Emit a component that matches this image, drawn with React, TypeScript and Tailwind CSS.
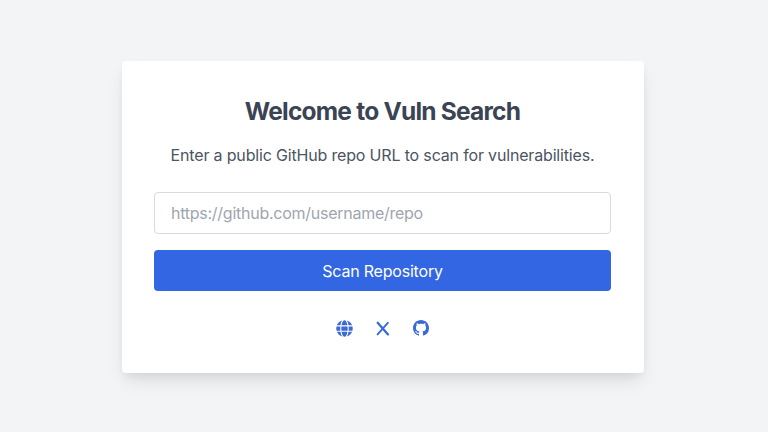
import { FaGlobe } from "react-icons/fa";

function XIcon() {
  return (
    <svg width="14" height="15" viewBox="0 0 14 15" fill="none" stroke="currentColor" strokeLinecap="round">
      <path d="M1.7 1.8 L12 13.4" strokeWidth="2.3" />
      <path d="M11.8 1.8 L1.6 13.4" strokeWidth="1.9" />
    </svg>
  );
}

function GithubIcon() {
  return (
    <svg width="16" height="16" viewBox="0 0 16 16" fill="currentColor">
      <path d="M8 0C3.58 0 0 3.58 0 8c0 3.54 2.29 6.53 5.47 7.59.4.07.55-.17.55-.38 0-.19-.01-.82-.01-1.49-2.01.37-2.53-.49-2.69-.94-.09-.23-.48-.94-.82-1.13-.28-.15-.68-.52-.01-.53.63-.01 1.08.58 1.23.82.72 1.21 1.87.87 2.33.66.07-.52.28-.87.51-1.07-1.78-.2-3.64-.89-3.64-3.95 0-.87.31-1.59.82-2.15-.08-.2-.36-1.02.08-2.12 0 0 .67-.21 2.2.82.64-.18 1.32-.27 2-.27s1.36.09 2 .27c1.53-1.04 2.2-.82 2.2-.82.44 1.1.16 1.92.08 2.12.51.56.82 1.27.82 2.15 0 3.07-1.87 3.75-3.65 3.95.29.25.54.73.54 1.48 0 1.07-.01 1.93-.01 2.2 0 .21.15.46.55.38A8.01 8.01 0 0 0 16 8c0-4.42-3.58-8-8-8z" />
    </svg>
  );
}

export default function App() {
  return (
    <div className="flex h-[432px] w-full justify-center bg-[#f2f4f6] pt-[61px] pr-[3px] font-['Inter','Liberation_Sans',sans-serif]">
      <div className="flex h-[312px] w-[522px] flex-col items-center rounded bg-white px-8 pt-8 shadow-[0_10px_18px_-3px_rgba(0,0,0,0.1),0_4px_8px_-2px_rgba(0,0,0,0.06)]">
        <h1 className="text-[24.5px] leading-9 font-bold tracking-[-0.78px] whitespace-nowrap text-[#3a4454]">Welcome to Vuln Search</h1>
        <p className="mt-[14px] text-base leading-6 tracking-[-0.17px] whitespace-nowrap text-[#4b5563]">
          Enter a public GitHub repo URL to scan for vulnerabilities.
        </p>
        <input
          type="text"
          placeholder="https://github.com/username/repo"
          className="mt-[24.5px] h-[42.5px] w-[457px] rounded border border-[#d8dadf] bg-white px-4 text-base tracking-[-0.26px] text-gray-700 placeholder:text-[#a0a5af]"
        />
        <button className="mt-4 h-[41px] w-[457px] rounded bg-[#3366e2] text-base tracking-[-0.2px] text-white">Scan Repository</button>
        <div className="mt-[28.5px] flex items-center gap-[23px] pr-px text-[#3b69d8]">
          <a aria-label="Website"><FaGlobe size={17} /></a>
          <a aria-label="X"><XIcon /></a>
          <a aria-label="GitHub"><GithubIcon /></a>
        </div>
      </div>
    </div>
  );
}
